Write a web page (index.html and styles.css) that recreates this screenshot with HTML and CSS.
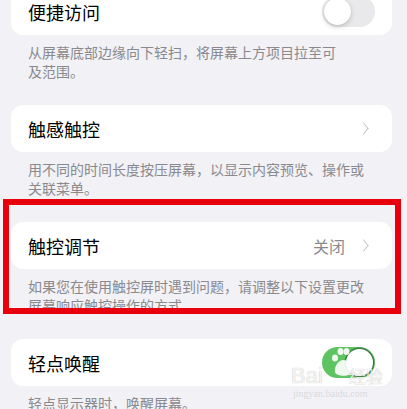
FILE: index.html
```html
<!DOCTYPE html>
<html lang="zh-CN">
<head>
    <meta charset="UTF-8">
    <meta name="viewport" content="width=device-width, initial-scale=1.0">
    <title>触控</title>
    <link rel="stylesheet" href="styles.css">
</head>
<body>
<div class="page">
    <div class="group">
        <div class="cell">
            <span class="cell-title">便捷访问</span>
            <span class="switch"><span class="knob"></span></span>
        </div>
        <p class="note">从屏幕底部边缘向下轻扫，将屏幕上方项目拉至可<br>及范围。</p>
    </div>

    <div class="group">
        <div class="cell">
            <span class="cell-title">触感触控</span>
            <span class="chevron"></span>
        </div>
        <p class="note">用不同的时间长度按压屏幕，以显示内容预览、操作或<br>关联菜单。</p>
    </div>

    <div class="group">
        <div class="cell">
            <span class="cell-title">触控调节</span>
            <span class="cell-value">关闭</span>
            <span class="chevron"></span>
        </div>
        <p class="note">如果您在使用触控屏时遇到问题，请调整以下设置更改<br>屏幕响应触控操作的方式。</p>
        <div class="highlight"></div>
    </div>

    <div class="group">
        <div class="cell">
            <span class="cell-title">轻点唤醒</span>
            <span class="switch on"><span class="knob"></span></span>
        </div>
        <p class="note">轻点显示器时，唤醒屏幕。</p>
        <div class="mark">
            <svg class="paw" width="24" height="30" viewBox="0 0 24 30">
                <ellipse cx="4" cy="11" rx="3" ry="3.6"/>
                <ellipse cx="9.5" cy="4.5" rx="3" ry="3.6"/>
                <ellipse cx="15.5" cy="4.5" rx="3" ry="3.6"/>
                <ellipse cx="21" cy="11" rx="2.8" ry="3.6"/>
                <path d="M12.5 13 C7 13 3 20 4 25 C5 30 20 30 21 25 C22 20 18 13 12.5 13 Z"/>
            </svg>
            <span class="mark-name"><span class="mark-latin">Bai</span><span class="mark-gap"></span>经验</span>
            <span class="mark-url">jingyan.baidu.com</span>
        </div>
    </div>
</div>
</body>
</html>
```

FILE: styles.css
```css
body, html {
    margin: 0;
    padding: 0;
    height: 100%;
    overflow: hidden;
    font-family: "Noto Sans CJK SC", "Noto Sans", sans-serif;
    background-color: #f1f1f6;
}
.page {
    margin-top: -12px;
    padding: 0 15px 0 11px;
}
.group {
    position: relative;
}
.cell {
    display: flex;
    align-items: center;
    height: 47px;
    padding: 0 22px 0 17px;
    background-color: #ffffff;
    border-radius: 12px;
}
.cell-title {
    flex: 1;
    font-size: 18px;
    color: #000;
    padding-top: 1px;
}
.cell-value {
    font-size: 16px;
    color: #8a8a8e;
    margin-right: 14px;
    padding-top: 1px;
}
.chevron {
    width: 8px;
    height: 8px;
    border-top: 1.8px solid #bfbfc4;
    border-right: 1.8px solid #bfbfc4;
    transform: scaleX(0.8) rotate(45deg);
    margin-right: 2px;
}
.note {
    margin: 0;
    padding: 8px 17px 24px;
    font-size: 14px;
    line-height: 19px;
    color: #8a8a8e;
}
.switch {
    position: relative;
    width: 53px;
    height: 31px;
    margin-right: -5px;
    border-radius: 16px;
    background-color: #e9e9ec;
}
.switch .knob {
    position: absolute;
    top: 2px;
    left: 2px;
    width: 27px;
    height: 27px;
    border-radius: 50%;
    background-color: #fff;
    box-shadow: 0 2px 5px rgba(0, 0, 0, 0.18), 0 0 1px rgba(0, 0, 0, 0.15);
}
.switch.on {
    background-color: #5ec462;
}
.switch.on .knob {
    left: auto;
    right: 2px;
    box-shadow: 0 0 0 1.5px #3f7f45;
}
.highlight {
    position: absolute;
    top: -23px;
    left: -8px;
    right: -9px;
    height: 115px;
    box-sizing: border-box;
    border: 6px solid #e8000c;
}
/* watermark stamped over the last row */
.mark {
    position: absolute;
    top: 6px;
    left: 278px;
    width: 100px;
    color: rgba(255, 255, 255, 0.85);
    pointer-events: none;
}
.paw {
    position: absolute;
    top: 2px;
    left: 42px;
    fill: rgba(255, 255, 255, 0.9);
}
.mark-name {
    position: absolute;
    top: 21px;
    left: 2px;
    display: flex;
    align-items: baseline;
    font-size: 17px;
    line-height: 20px;
    text-shadow: 0 0 1px rgba(120, 120, 120, 0.6);
}
.mark-latin {
    font-family: "Liberation Sans", sans-serif;
    font-size: 22px;
}
.mark-gap {
    width: 26px;
}
.mark-url {
    position: absolute;
    top: 43px;
    left: 4px;
    font-family: "Liberation Serif", serif;
    font-size: 10px;
    color: rgba(200, 200, 205, 0.6);
}
```
